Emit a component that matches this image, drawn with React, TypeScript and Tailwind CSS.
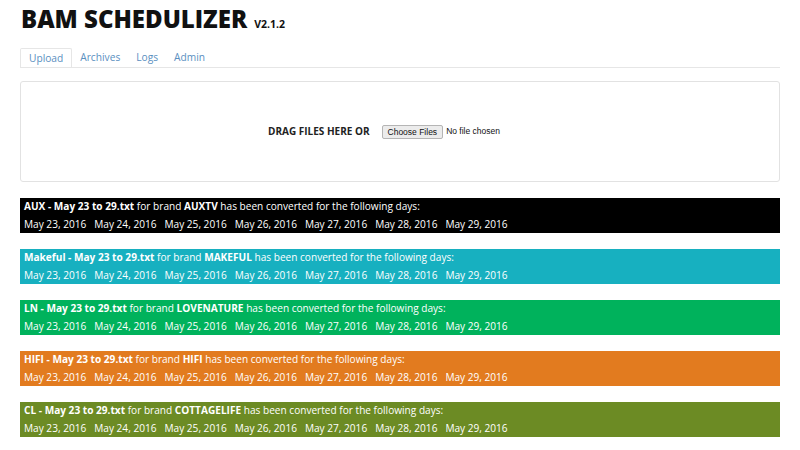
import React from 'react';

const days = ['May 23, 2016', 'May 24, 2016', 'May 25, 2016', 'May 26, 2016', 'May 27, 2016', 'May 28, 2016', 'May 29, 2016'];

const results = [
  { prefix: 'AUX', brand: 'AUXTV', bg: 'bg-[#000000]' },
  { prefix: 'Makeful', brand: 'MAKEFUL', bg: 'bg-[#17b0c0]' },
  { prefix: 'LN', brand: 'LOVENATURE', bg: 'bg-[#00b25c]' },
  { prefix: 'HIFI', brand: 'HIFI', bg: 'bg-[#e27b1f]' },
  { prefix: 'CL', brand: 'COTTAGELIFE', bg: 'bg-[#6c8b24]' },
];

const tabs = ['Upload', 'Archives', 'Logs', 'Admin'];

export default function App() {
  return (
    <div className="w-[800px] h-[450px] bg-white px-5 pt-[2px] font-['Open_Sans',sans-serif] text-[#222] overflow-hidden">
      <h1 className="flex items-baseline gap-[7px] leading-[34px] pl-[1px]">
        <span className="text-[24px] font-extrabold text-[#111]">BAM SCHEDULIZER</span>
        <span className="text-[10.5px] font-bold text-[#111]">V2.1.2</span>
      </h1>

      {/* Tabs */}
      <div className="mt-[7px] flex border-b border-[#e6e6e6] text-[10.2px]">
        {tabs.map((t, i) => (
          <div
            key={t}
            className={
              i === 0
                ? 'px-[8px] h-[19px] leading-[19px] border border-b-0 border-[#e6e6e6] rounded-t-[2px] bg-white text-[#5a8fbf] -mb-px'
                : 'px-[8px] h-[19px] leading-[19px] text-[#5a8fbf]'
            }
          >
            {t}
          </div>
        ))}
      </div>

      {/* Drop zone */}
      <div className="mt-[13px] h-[101px] border border-[#e2e2e2] rounded-[3px] flex items-center justify-center gap-[12px] pr-[32px]">
        <span className="text-[10px] font-bold text-[#222]">DRAG FILES HERE OR</span>
        <div className="flex items-center gap-[3px] font-['Liberation_Sans',sans-serif] text-[8.5px]">
          <button className="h-[14px] px-[5px] border border-[#b5b5b5] rounded-[2px] bg-[#ececec] text-[#111] leading-[12px]">Choose Files</button>
          <span className="text-[#111]">No file chosen</span>
        </div>
      </div>

      {/* Results */}
      <div className="mt-[16px] flex flex-col gap-[16px]">
        {results.map((r) => (
          <div key={r.prefix} className={`${r.bg} h-[35px] px-[4px] text-white text-[10.1px] leading-[17.5px]`}>
            <div>
              <b className="font-bold">{r.prefix} - May 23 to 29.txt</b> for brand <b className="font-bold">{r.brand}</b> has been converted for the following days:
            </div>
            <div className="flex gap-[8px]">
              {days.map((d) => (
                <span key={d}>{d}</span>
              ))}
            </div>
          </div>
        ))}
      </div>
    </div>
  );
}
